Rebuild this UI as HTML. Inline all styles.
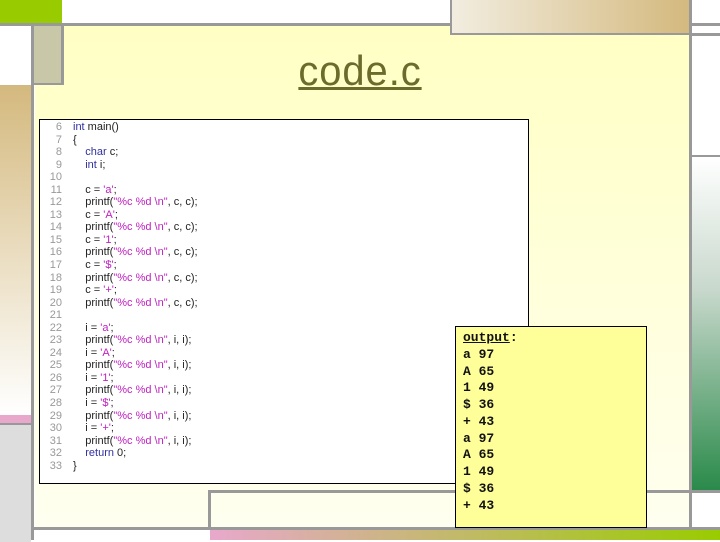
<!DOCTYPE html>
<html><head><meta charset="utf-8"><style>
*{margin:0;padding:0}
body{width:720px;height:540px;position:relative;overflow:hidden;background:#fff;font-family:"Liberation Sans",sans-serif}
div{position:absolute}
.code{font-size:11px;line-height:12.55px;color:#222}
.ln{color:#999;display:inline-block;width:22px;text-align:right;margin-right:11px}
.k{color:#3030a0}.s{color:#c020c0}
.out{font-family:"Liberation Mono",monospace;font-size:13px;line-height:16.75px;font-weight:bold;color:#111}
</style></head><body>
<div style="left:35px;top:26px;width:655px;height:502px;background:linear-gradient(#ffffc4,#fffff0)"></div>
<div style="left:0;top:0;width:62px;height:24px;background:#99cc00"></div>
<div style="left:0;top:23px;width:720px;height:3px;background:#999"></div>
<div style="left:450px;top:0;width:238px;height:33px;background:linear-gradient(90deg,#f2ede0,#d4b97e);border:2px solid #999;border-top:none"></div>
<div style="left:690px;top:33px;width:30px;height:3px;background:#999"></div>
<div style="left:689px;top:0;width:3px;height:540px;background:#999"></div>
<div style="left:692px;top:157px;width:28px;height:333px;background:linear-gradient(#fff,#c8d8cc 40%,#2a8a4a)"></div>
<div style="left:692px;top:155px;width:28px;height:2px;background:#999"></div>
<div style="left:692px;top:490px;width:28px;height:3px;background:#999"></div>
<div style="left:31px;top:26px;width:3px;height:514px;background:#999"></div>
<div style="left:34px;top:26px;width:27px;height:57px;background:#c8c8a8;border-right:3px solid #999;border-bottom:2px solid #999"></div>
<div style="left:0;top:85px;width:31px;height:330px;background:linear-gradient(#d4b97e,#fff)"></div>
<div style="left:0;top:415px;width:31px;height:8px;background:#e8a8cc"></div>
<div style="left:0;top:423px;width:31px;height:117px;background:#ddd;border-top:2px solid #999"></div>
<div style="left:34px;top:527px;width:686px;height:3px;background:#999"></div>
<div style="left:210px;top:530px;width:510px;height:10px;background:linear-gradient(90deg,#e8a8cc,#99cc00)"></div>
<div style="left:208px;top:490px;width:482px;height:3px;background:#999"></div>
<div style="left:208px;top:490px;width:3px;height:40px;background:#999"></div>
<div style="left:0;top:46px;width:720px;text-align:center;font-size:42px;line-height:50px;color:#6b6b2b;text-decoration:underline;text-decoration-thickness:3px;letter-spacing:1px;transform:scaleX(0.95)">code.c</div>
<div style="left:39px;top:119px;width:488px;height:363px;background:#fff;border:1px solid #000"></div>
<div class="code" style="left:40px;top:121px">
<div style="position:static"><span class="ln">6</span><span class="k">int</span> main()</div>
<div style="position:static"><span class="ln">7</span>{</div>
<div style="position:static"><span class="ln">8</span>&nbsp;&nbsp;&nbsp;&nbsp;<span class="k">char</span> c;</div>
<div style="position:static"><span class="ln">9</span>&nbsp;&nbsp;&nbsp;&nbsp;<span class="k">int</span> i;</div>
<div style="position:static"><span class="ln">10</span></div>
<div style="position:static"><span class="ln">11</span>&nbsp;&nbsp;&nbsp;&nbsp;c = <span class="s">'a'</span>;</div>
<div style="position:static"><span class="ln">12</span>&nbsp;&nbsp;&nbsp;&nbsp;printf(<span class="s">"%c %d \n"</span>, c, c);</div>
<div style="position:static"><span class="ln">13</span>&nbsp;&nbsp;&nbsp;&nbsp;c = <span class="s">'A'</span>;</div>
<div style="position:static"><span class="ln">14</span>&nbsp;&nbsp;&nbsp;&nbsp;printf(<span class="s">"%c %d \n"</span>, c, c);</div>
<div style="position:static"><span class="ln">15</span>&nbsp;&nbsp;&nbsp;&nbsp;c = <span class="s">'1'</span>;</div>
<div style="position:static"><span class="ln">16</span>&nbsp;&nbsp;&nbsp;&nbsp;printf(<span class="s">"%c %d \n"</span>, c, c);</div>
<div style="position:static"><span class="ln">17</span>&nbsp;&nbsp;&nbsp;&nbsp;c = <span class="s">'$'</span>;</div>
<div style="position:static"><span class="ln">18</span>&nbsp;&nbsp;&nbsp;&nbsp;printf(<span class="s">"%c %d \n"</span>, c, c);</div>
<div style="position:static"><span class="ln">19</span>&nbsp;&nbsp;&nbsp;&nbsp;c = <span class="s">'+'</span>;</div>
<div style="position:static"><span class="ln">20</span>&nbsp;&nbsp;&nbsp;&nbsp;printf(<span class="s">"%c %d \n"</span>, c, c);</div>
<div style="position:static"><span class="ln">21</span></div>
<div style="position:static"><span class="ln">22</span>&nbsp;&nbsp;&nbsp;&nbsp;i = <span class="s">'a'</span>;</div>
<div style="position:static"><span class="ln">23</span>&nbsp;&nbsp;&nbsp;&nbsp;printf(<span class="s">"%c %d \n"</span>, i, i);</div>
<div style="position:static"><span class="ln">24</span>&nbsp;&nbsp;&nbsp;&nbsp;i = <span class="s">'A'</span>;</div>
<div style="position:static"><span class="ln">25</span>&nbsp;&nbsp;&nbsp;&nbsp;printf(<span class="s">"%c %d \n"</span>, i, i);</div>
<div style="position:static"><span class="ln">26</span>&nbsp;&nbsp;&nbsp;&nbsp;i = <span class="s">'1'</span>;</div>
<div style="position:static"><span class="ln">27</span>&nbsp;&nbsp;&nbsp;&nbsp;printf(<span class="s">"%c %d \n"</span>, i, i);</div>
<div style="position:static"><span class="ln">28</span>&nbsp;&nbsp;&nbsp;&nbsp;i = <span class="s">'$'</span>;</div>
<div style="position:static"><span class="ln">29</span>&nbsp;&nbsp;&nbsp;&nbsp;printf(<span class="s">"%c %d \n"</span>, i, i);</div>
<div style="position:static"><span class="ln">30</span>&nbsp;&nbsp;&nbsp;&nbsp;i = <span class="s">'+'</span>;</div>
<div style="position:static"><span class="ln">31</span>&nbsp;&nbsp;&nbsp;&nbsp;printf(<span class="s">"%c %d \n"</span>, i, i);</div>
<div style="position:static"><span class="ln">32</span>&nbsp;&nbsp;&nbsp;&nbsp;<span class="k">return</span> 0;</div>
<div style="position:static"><span class="ln">33</span>}</div>
</div>
<div style="left:455px;top:326px;width:190px;height:200px;background:#ffff99;border:1px solid #000"></div>
<div class="out" style="left:463px;top:330px"><u>output</u>:<br>a 97<br>A 65<br>1 49<br>$ 36<br>+ 43<br>a 97<br>A 65<br>1 49<br>$ 36<br>+ 43</div>
</body></html>
